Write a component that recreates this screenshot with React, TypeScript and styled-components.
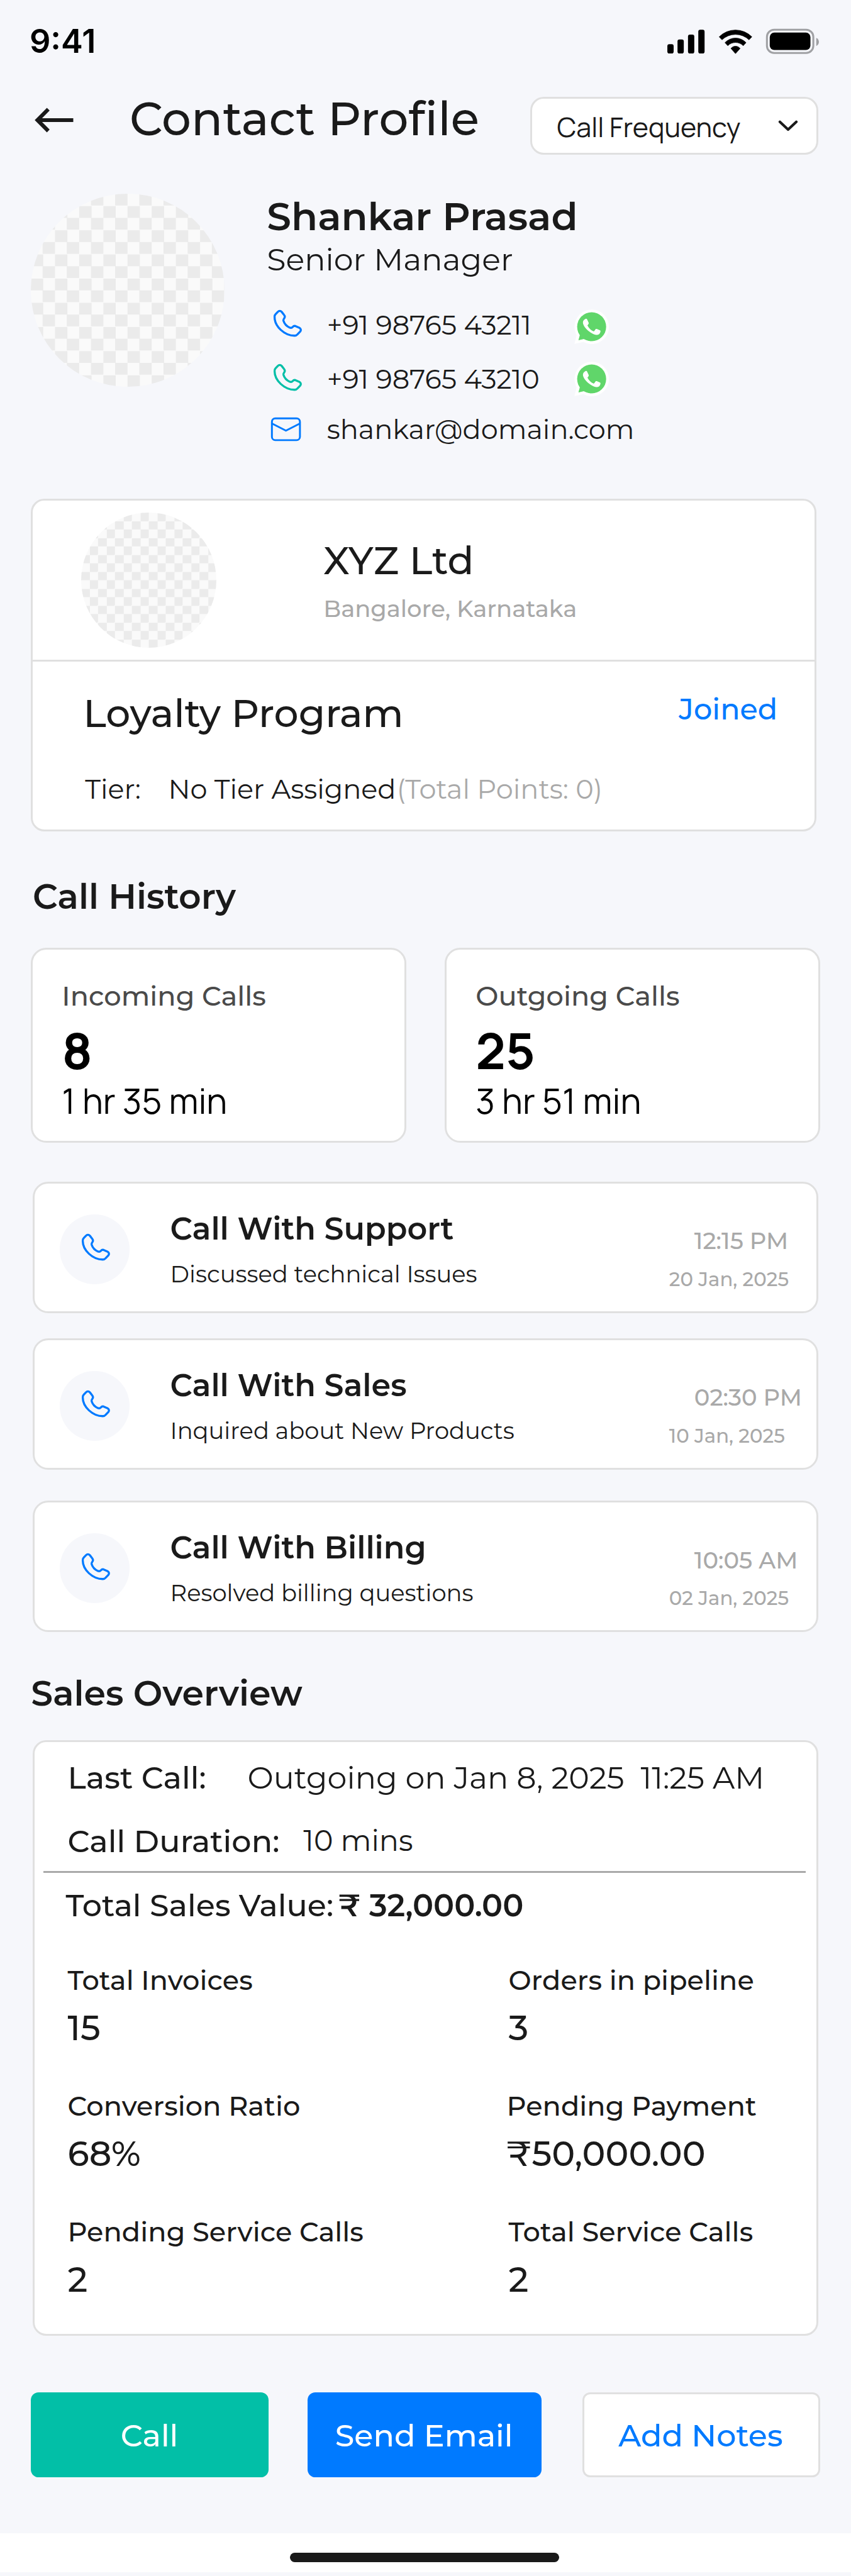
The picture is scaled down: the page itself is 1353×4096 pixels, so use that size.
import React from "react";
import styled, { createGlobalStyle } from "styled-components";

/* Artboard units are 1760 wide; the page is laid out at 1353px. */
const u = (n: number) => `${+(n * 0.76875).toFixed(3)}px`;

const nudge = (size: number) => ([40, 48, 60, 72, 96].includes(size) ? 0.8 : 0);

const color = {
  page: "#F6F7FB",
  ink: "#1A1A1A",
  border: "#E0E0E0",
  muted: "#A9A9A9",
  subtle: "#4A4A4A",
  blue: "#007AFF",
  teal: "#02BFA7",
};

const GlobalStyle = createGlobalStyle`
  html, body { margin: 0; padding: 0; background: ${color.page}; }
  * { box-sizing: border-box; }
  svg { display: block; flex: none; }
`;

const Page = styled.div`
  display: flex;
  flex-direction: column;
  width: 1353px;
  height: 4096px;
  overflow: hidden;
  background: ${color.page};
  color: ${color.ink};
  font-family: Montserrat, Inter, sans-serif;
`;

interface TextProps {
  $size: number;
  $weight?: number;
  $color?: string;
  $top?: number;
  $left?: number;
  $width?: number;
  $font?: "manrope";
}

const Text = styled.div<TextProps>`
  flex: none;
  margin: ${(p) => u(p.$top ?? 0)} 0 ${(p) => u(-nudge(p.$size))} ${(p) => u(p.$left ?? 0)};
  padding-top: ${(p) => u(nudge(p.$size))};
  width: ${(p) => (p.$width ? u(p.$width) : "auto")};
  color: ${(p) => p.$color ?? "inherit"};
  font-family: ${(p) => (p.$font ? "Manrope, Inter, sans-serif" : "inherit")};
  font-size: ${(p) => u(p.$size)};
  font-weight: ${(p) => p.$weight ?? 400};
  line-height: 1;
  letter-spacing: ${(p) => (p.$weight === 500 && p.$size >= 56 ? "0.001em" : "normal")};
  white-space: pre;
`;

const StatusBar = styled.div`
  display: flex;
  justify-content: space-between;
  align-items: flex-start;
  flex: none;
  height: ${u(160)};
  padding: ${u(51.3)} ${u(66)} 0 ${u(61)};
  color: #000;
`;

const Clock = styled.div`
  font-family: Inter, sans-serif;
  font-size: ${u(68)};
  font-weight: 600;
  line-height: 1;
`;

const StatusIcons = styled.svg`
  width: ${u(314)};
  height: ${u(54)};
  margin-top: ${u(7.7)};
`;

const Header = styled.header`
  display: flex;
  align-items: flex-start;
  flex: none;
  height: ${u(240)};
  padding: 0 ${u(68)} 0 ${u(72)};
`;

const BackArrow = styled.svg`
  width: ${u(80)};
  height: ${u(52)};
  margin-top: ${u(62)};
`;

const Select = styled.div`
  display: flex;
  align-items: flex-start;
  justify-content: space-between;
  width: ${u(596)};
  height: ${u(120)};
  margin: ${u(40)} 0 0 auto;
  padding: 0 ${u(37)} 0 ${u(52)};
  background: #fff;
  border: ${u(4)} solid ${color.border};
  border-radius: ${u(28)};
`;

const Chevron = styled.svg`
  width: ${u(42)};
  height: ${u(26)};
  margin-top: ${u(43)};
`;

const Profile = styled.section`
  display: flex;
  align-items: flex-start;
  flex: none;
  height: ${u(632)};
  padding-left: ${u(64)};
`;

const Avatar = styled.div<{ $size: number }>`
  flex: none;
  width: ${(p) => u(p.$size)};
  height: ${(p) => u(p.$size)};
  border-radius: 50%;
  background: conic-gradient(#ebebeb 25%, #fafafa 0 50%, #ebebeb 0 75%, #fafafa 0);
  background-size: ${(p) => u(p.$size / 8)} ${(p) => u(p.$size / 8)};
`;

const Identity = styled.div<{ $left: number; $top: number }>`
  padding-left: ${(p) => u(p.$left)};
  padding-top: ${(p) => u(p.$top)};
`;

const ContactList = styled.div`
  margin-top: ${u(69)};
`;

const ContactRow = styled.div`
  display: grid;
  grid-template-columns: ${u(124)} ${u(512)} auto;
  align-items: start;
  height: ${u(112)};
`;

const ContactIcon = styled.div<{ $left: number }>`
  padding-left: ${(p) => u(p.$left)};
`;

const WhatsAppBadge = styled.svg<{ $top: number }>`
  width: ${u(72.3)};
  height: ${u(71.7)};
  margin-top: ${(p) => u(p.$top)};
`;

const Card = styled.section<{ $height: number; $top?: number; $left?: number; $radius?: number }>`
  flex: none;
  width: ${u(1624)};
  height: ${(p) => u(p.$height)};
  margin-top: ${(p) => u(p.$top ?? 0)};
  margin-left: ${(p) => u(p.$left ?? 68)};
  background: #fff;
  border: ${u(4)} solid ${color.border};
  border-radius: ${(p) => u(p.$radius ?? 28)};
`;

const Company = styled.div`
  display: flex;
  align-items: flex-start;
  height: ${u(332)};
  padding: ${u(24)} 0 0 ${u(100)};
  border-bottom: ${u(4)} solid ${color.border};
`;

const Row = styled.div<{ $top: number; $left: number }>`
  display: flex;
  align-items: flex-start;
  margin-top: ${(p) => u(p.$top)};
  padding-left: ${(p) => u(p.$left)};
`;

const Stats = styled.div`
  display: flex;
  flex: none;
  gap: ${u(80)};
  margin: ${u(69.8)} 0 0 ${u(64)};
`;

const StatCard = styled.div`
  width: ${u(776)};
  height: ${u(404)};
  padding: ${u(67.9)} 0 0 ${u(60)};
  background: #fff;
  border: ${u(4)} solid ${color.border};
  border-radius: ${u(32)};
`;

const LogCard = styled(Card)`
  display: flex;
  align-items: flex-start;
  padding-left: ${u(52)};
`;

const IconDisc = styled.div`
  flex: none;
  width: ${u(144)};
  height: ${u(144)};
  margin-top: ${u(64)};
  padding: ${u(38)} 0 0 ${u(42)};
  border-radius: 50%;
  background: ${color.page};
`;

const LogBody = styled.div`
  flex: none;
  width: ${u(1032)};
  margin-left: ${u(84)};
  padding-top: ${u(61.1)};
`;

const LogWhen = styled.div`
  padding-top: ${u(94.8)};
`;

const Rule = styled.hr`
  width: ${u(1576)};
  height: ${u(4)};
  margin: ${u(28.9)} 0 0 ${u(18)};
  border: 0;
  background: ${color.muted};
`;

const Metrics = styled.div`
  display: grid;
  grid-template-columns: ${u(908)} 1fr;
  grid-auto-rows: ${u(260)};
  margin: ${u(94.8)} 0 0 ${u(68)};
`;

const Metric = styled.div<{ $indent: number }>`
  padding-left: ${(p) => u(p.$indent)};
`;

const Actions = styled.div`
  display: grid;
  grid-template-columns: ${u(492)} ${u(484)} ${u(492)};
  column-gap: ${u(80)};
  flex: none;
  margin-top: ${u(116)};
  padding-left: ${u(64)};

  > :last-child {
    margin: 0 ${u(-4)} 0 ${u(4)};
  }
`;

const Button = styled.button<{ $bg: string; $fg: string; $outlined?: boolean }>`
  height: ${u(176)};
  padding: ${u(3)} ${u(2)} 0 0;
  background: ${(p) => p.$bg};
  border: ${(p) => (p.$outlined ? `${u(4)} solid ${color.border}` : "0")};
  border-radius: ${u(16)};
  color: ${(p) => p.$fg};
  font: 500 ${u(64)} / 1 Montserrat, Inter, sans-serif;
`;

const HomeArea = styled.footer`
  display: flex;
  justify-content: center;
  flex: none;
  height: ${u(80)};
  margin-top: ${u(116)};
  padding: ${u(40)} ${u(4)} 0 0;
  background: #fff;
`;

const HomeIndicator = styled.div`
  width: ${u(556)};
  height: ${u(20)};
  border-radius: ${u(10)};
  background: ${color.ink};
`;

const PhoneSvg = styled.svg`
  width: ${u(64)};
  height: ${u(60.667)};
`;

const MailSvg = styled.svg`
  width: ${u(64)};
  height: ${u(50.667)};
`;

const PhoneIcon = ({ stroke }: { stroke: string }) => (
  <PhoneSvg viewBox="70 112 192 182" fill="none" stroke={stroke} strokeWidth="13" strokeLinejoin="round">
    <path d="M104 131C111 124 121 124 128 131L142 149C149 157 149 162 145 169C140 176 137 179 139 186C144 202 158 220 178 229C187 232 191 231 196 225C201 219 206 217 213 219L238 230C248 235 249 246 243 253L227 270C221 277 216 279 208 279C146 279 84 222 84 164C83 156 85 151 89 147Z" />
  </PhoneSvg>
);

const MailIcon = () => (
  <MailSvg viewBox="60 784 192 152" fill="none" stroke={color.blue} strokeWidth="11.5">
    <rect x="69" y="793" width="174" height="135" rx="21" />
    <path d="M70 825L156 869L242 825" strokeLinejoin="round" />
  </MailSvg>
);

const WhatsApp = ({ top }: { top: number }) => (
  <WhatsAppBadge $top={top} viewBox="24 89 217 215">
    <circle cx="132.5" cy="197" r="107" fill="#fff" />
    <path d="M25 303L40 245L82 290Z" fill="#fff" />
    <circle cx="132" cy="196.500" r="90" fill="#60D66A" />
    <path d="M46 222L59 247L50 280L84 272L125 286L132 196Z" fill="#60D66A" />
    <path d="M91 149C96 146 102 146 104 151L114 173C115 178 110 183 106 188C114 204 128 218 145 226C149 222 154 215 158 210C161 209 164 210 166 211L184 219C188 221 187 226 186 229C183 242 172 248 162 247C127 243 80 200 78 172C77 162 84 152 91 149Z" fill="#fff" />
  </WhatsAppBadge>
);

const stats = [
  { label: "Incoming Calls", count: "8", time: "1 hr 35 min" },
  { label: "Outgoing Calls", count: "25", time: "3 hr 51 min" },
];

const logs = [
  { title: "Call With Support", note: "Discussed technical Issues", time: "12:15 PM", date: "20 Jan, 2025", gap: 80 },
  { title: "Call With Sales", note: "Inquired about New Products", time: "02:30 PM", date: "10 Jan, 2025", gap: 52 },
  { title: "Call With Billing", note: "Resolved billing questions", time: "10:05 AM", date: "02 Jan, 2025", gap: 64 },
];

const metrics = [
  { label: "Total Invoices", value: "15", indent: 0 },
  { label: "Orders in pipeline", value: "3", indent: 4 },
  { label: "Conversion Ratio", value: "68%", indent: 0 },
  { label: "Pending Payment", value: "₹50,000.00", indent: 0 },
  { label: "Pending Service Calls", value: "2", indent: 0 },
  { label: "Total Service Calls", value: "2", indent: 4 },
];

export default function App() {
  return (
    <Page>
      <GlobalStyle />
      <StatusBar>
        <Clock>9:41</Clock>
        <StatusIcons viewBox="20 19 314 54">
          <rect x="20" y="52" width="13" height="19" rx="4" />
          <rect x="41" y="42" width="13" height="29" rx="4" />
          <rect x="62.700" y="32" width="13" height="39" rx="4" />
          <rect x="84" y="22" width="13" height="49" rx="4" />
          <g stroke="#000" strokeWidth="1" strokeLinejoin="round">
            <path d="M127.200 36.700A47.400 47.400 0 0 1 194.800 36.700L189 42.800A40.600 40.600 0 0 0 133 42.800Z" />
            <path d="M139.200 48.700A29.900 29.900 0 0 1 182.800 48.700L177 55A22.500 22.500 0 0 0 145 55Z" />
            <path d="M151.500 60.700A12 12 0 0 1 170.500 60.700L161 71.300Z" />
          </g>
          <rect x="226" y="22" width="96" height="48" rx="15" fill="none" stroke="#A0A1A4" strokeWidth="4" />
          <rect x="231.800" y="27.800" width="84.200" height="36.200" rx="9.500" />
          <path d="M328 39C331.500 40.500 333.500 43.800 333.500 47.300C333.500 50.800 331.500 54 328 55.600Z" fill="#A0A1A4" />
        </StatusIcons>
      </StatusBar>

      <Header>
        <BackArrow viewBox="72 222 80 52" fill="none" stroke={color.ink} strokeWidth="8">
          <path d="M152 248H78M100.300 225.500L77.900 248L100.300 270.500" />
        </BackArrow>
        <Text as="h1" $size={96} $weight={500} $left={116} $top={38.6}>
          Contact Profile
        </Text>
        <Select>
          <Text $size={56} $font="manrope" $top={30.6}>Call Frequency</Text>
          <Chevron viewBox="1608 247 42 26" fill="none" stroke={color.ink} strokeWidth="5.4" strokeLinecap="round" strokeLinejoin="round">
            <path d="M1611.800 251.800L1628.800 267.800L1645.800 251.800" />
          </Chevron>
        </Select>
      </Header>

      <Profile>
        <Avatar $size={400} />
        <Identity $left={88} $top={7.3}>
          <Text $size={80} $weight={600}>Shankar Prasad</Text>
          <Text $size={64} $top={17.8}>Senior Manager</Text>
          <ContactList>
            <ContactRow>
              <ContactIcon $left={11.3}><PhoneIcon stroke={color.blue} /></ContactIcon>
              <Text $size={56} $top={5.8}>+91 98765 43211</Text>
              <WhatsApp top={1.6} />
            </ContactRow>
            <ContactRow>
              <ContactIcon $left={11.3}><PhoneIcon stroke={color.teal} /></ContactIcon>
              <Text $size={56} $top={5.8}>+91 98765 43210</Text>
              <WhatsApp top={-2.4} />
            </ContactRow>
            <ContactRow>
              <ContactIcon $left={8}><MailIcon /></ContactIcon>
              <Text $size={56} $top={-2.2}>shankar@domain.com</Text>
            </ContactRow>
          </ContactList>
        </Identity>
      </Profile>

      <Card $height={688} $left={64}>
        <Company>
          <Avatar $size={280} />
          <Identity $left={221} $top={59.3}>
            <Text $size={80} $weight={500}>XYZ Ltd</Text>
            <Text $size={48} $weight={500} $color={color.muted} $top={35.5}>Bangalore, Karnataka</Text>
          </Identity>
        </Company>
        <Row $top={67.3} $left={104}>
          <Text $size={80} $weight={500} $width={1232}>Loyalty Program</Text>
          <Text $size={60} $weight={500} $color={color.blue} $top={1.2}>Joined</Text>
        </Row>
        <Row $top={88.6} $left={108}>
          <Text $size={56} $width={172}>Tier:</Text>
          <Text $size={56} $width={472.5}>No Tier Assigned</Text>
          <Text $size={56} $color={color.muted}>(Total Points: 0)</Text>
        </Row>
      </Card>

      <Text $size={72} $weight={600} $top={98.2} $left={67.5}>Call History</Text>
      <Stats>
        {stats.map((s) => (
          <StatCard key={s.label}>
            <Text $size={56} $weight={500} $color={color.subtle}>{s.label}</Text>
            <Text $size={104} $weight={700} $color="#000" $font="manrope" $top={32.3}>{s.count}</Text>
            <Text $size={72} $color="#000" $font="manrope" $top={16.2}>{s.time}</Text>
          </StatCard>
        ))}
      </Stats>

      {logs.map((l) => (
        <LogCard key={l.title} $height={272} $top={l.gap} $radius={32}>
          <IconDisc><PhoneIcon stroke={color.blue} /></IconDisc>
          <LogBody>
            <Text $size={64} $weight={600}>{l.title}</Text>
            <Text $size={48} $top={37.7}>{l.note}</Text>
          </LogBody>
          <LogWhen>
            <Text $size={48} $weight={500} $color={color.muted} $left={52}>{l.time}</Text>
            <Text $size={40} $weight={500} $color={color.muted} $top={34.9}>{l.date}</Text>
          </LogWhen>
        </LogCard>
      ))}

      <Text $size={72} $weight={600} $top={90.2} $left={64}>Sales Overview</Text>
      <Card $height={1232} $top={61.8}>
        <Row $top={41.1} $left={68}>
          <Text $size={64} $weight={500} $width={372}>Last Call:</Text>
          <Text $size={64}>{"Outgoing on Jan 8, 2025  11:25 AM"}</Text>
        </Row>
        <Row $top={68} $left={68}>
          <Text $size={64} $weight={500} $width={487.5}>Call Duration:</Text>
          <Text $size={60} $top={-0.6}>10 mins</Text>
        </Row>
        <Rule />
        <Row $top={35.1} $left={64}>
          <Text $size={64} $weight={500} $width={564}>Total Sales Value:</Text>
          <Text $size={64} $weight={600}>₹ 32,000.00</Text>
        </Row>
        <Metrics>
          {metrics.map((m) => (
            <Metric key={m.label} $indent={m.indent}>
              <Text $size={56} $weight={500}>{m.label}</Text>
              <Text $size={72} $weight={500} $top={34.8}>{m.value}</Text>
            </Metric>
          ))}
        </Metrics>
      </Card>

      <Actions>
        <Button $bg={color.teal} $fg="#fff">Call</Button>
        <Button $bg={color.blue} $fg="#fff">Send Email</Button>
        <Button $bg="#fff" $fg={color.blue} $outlined>Add Notes</Button>
      </Actions>

      <HomeArea>
        <HomeIndicator />
      </HomeArea>
    </Page>
  );
}
